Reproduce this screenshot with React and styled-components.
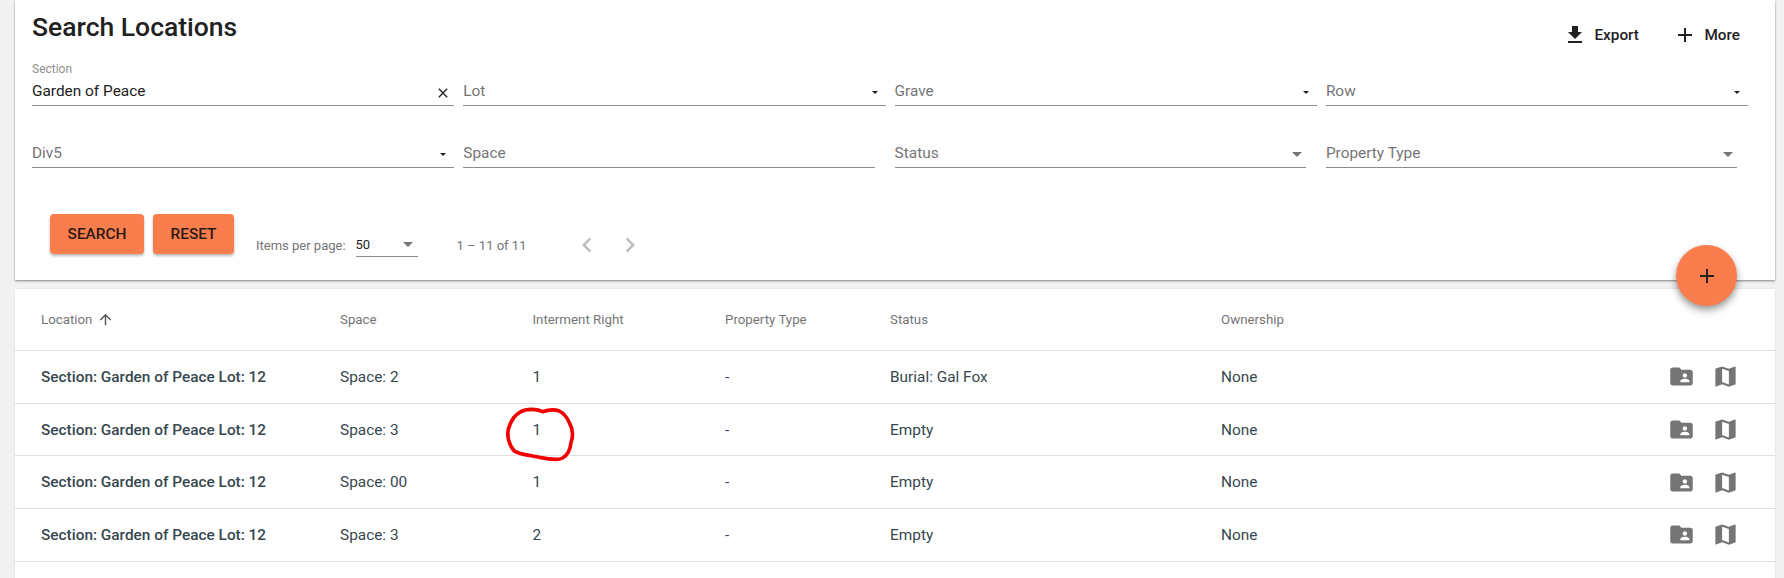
import React from 'react';
import styled, {createGlobalStyle} from 'styled-components';

const GlobalStyle = createGlobalStyle`
    html, body {
        margin: 0;
        height: 100%;
        overflow: hidden;
        background: #f1f1f1;
        font-family: Roboto, 'Liberation Sans', sans-serif;
    }
`

const ORANGE = '#fa7d4d';

const Page = styled.div`
    position: relative;
    height: 100vh;
    padding: 0 9px 0 15px;
    box-sizing: border-box;
    display: flex;
    flex-direction: column;
    gap: 9px;
`

const SearchCard = styled.section`
    height: 280px;
    flex: none;
    background: #fff;
    box-sizing: border-box;
    padding: 0 0 0 17px;
    box-shadow: 0 1px 2px rgba(0, 0, 0, .45);
`

const Header = styled.div`
    height: 62px;
    display: flex;
    justify-content: space-between;
`

const Title = styled.h1`
    margin: 12px 0 0;
    font-size: 26.5px;
    line-height: 30px;
    font-weight: 500;
    color: #212121;
`

const Actions = styled.div`
    display: flex;
    align-items: flex-start;
    gap: 36.5px;
    padding: 25px 35px 0 0;
`

const Action = styled.button`
    border: none;
    background: none;
    padding: 0;
    display: flex;
    align-items: center;
    gap: 8px;
    height: 20px;
    font: 500 15.3px Roboto, sans-serif;
    color: #212121;
    svg {
        width: 24px;
        height: 24px;
        margin: 0 -1px 0 -2px;
        fill: #212121;
    }
`

const Fields = styled.div`
    display: grid;
    grid-template-columns: repeat(4, 431.3px);
    row-gap: 18px;
`

const Field = styled.div`
    margin-right: ${props => props.$inset}px;
    height: 44px;
    box-sizing: border-box;
    border-bottom: 1px solid #8c8c8c;
    display: flex;
    align-items: flex-end;
    justify-content: space-between;
    position: relative;
    padding: 0 ${props => (props.$big ? 4 : 8)}px 4px 0;
`

const FloatLabel = styled.label`
    position: absolute;
    left: 0;
    top: 0;
    font-size: 12px;
    line-height: 14px;
    color: #8f8f8f;
`

const FieldText = styled.span`
    font-size: 15.4px;
    line-height: 20px;
    color: ${props => (props.$filled ? '#212121' : '#757575')};
`

const Caret = styled.i`
    width: 0;
    height: 0;
    margin-bottom: ${props => (props.$big ? 6 : 7)}px;
    border-style: solid;
    border-color: ${props => (props.$big ? '#757575' : '#212121')} transparent transparent;
    border-width: ${props => (props.$big ? '5px 5px 0' : '3px 3.5px 0')};
`

const ClearIcon = styled.svg`
    width: 16px;
    height: 16px;
    margin: 0 -5px 0 0;
    fill: #212121;
`

const Controls = styled.div`
    display: flex;
    align-items: flex-start;
    margin: 46px 0 0 18px;
`

const Button = styled.button`
    height: 40px;
    width: ${props => props.$width}px;
    margin-right: 9px;
    border: none;
    border-radius: 4px;
    background: ${ORANGE};
    color: #2b1a12;
    font: 500 15.4px Roboto, sans-serif;
    box-shadow: 0 2px 3px rgba(0, 0, 0, .28);
`

const Paginator = styled.div`
    display: flex;
    align-items: center;
    height: 36px;
    margin: 13px 0 0 13px;
    font-size: 13px;
    color: #757575;
`

const PageSelect = styled.div`
    width: 62px;
    height: 24px;
    margin: 0 39px 0 10px;
    box-sizing: border-box;
    border-bottom: 1px solid #8c8c8c;
    display: flex;
    align-items: center;
    justify-content: space-between;
    padding: 0 5px 0 0;
    color: #212121;
    i {
        margin-bottom: 0;
    }
`

const PageRange = styled.span`
    width: 115px;
`

const PageArrow = styled.svg`
    width: 30px;
    height: 30px;
    margin-right: 13px;
    fill: #bdbdbd;
    transform: ${props => (props.$flip ? 'scaleX(-1)' : 'none')};
`

const Fab = styled.button`
    position: absolute;
    left: 1676px;
    top: 245px;
    width: 61px;
    height: 61px;
    border: none;
    border-radius: 50%;
    padding: 0;
    background: ${ORANGE};
    box-shadow: 0 3px 6px rgba(0, 0, 0, .3), 0 6px 10px rgba(0, 0, 0, .14);
    display: flex;
    align-items: center;
    justify-content: center;
    svg {
        width: 24px;
        height: 24px;
        fill: #212121;
    }
`

const TableCard = styled.section`
    flex: 1;
    background: #fff;
    box-shadow: 0 0 1px rgba(0, 0, 0, .2);
`

const Row = styled.div`
    display: grid;
    grid-template-columns: 299px 192.5px 192.5px 165px 331px 200px 1fr;
    align-items: center;
    box-sizing: border-box;
    padding-left: 26px;
    height: ${props => (props.$head ? 62 : 52.7)}px;
    border-bottom: 1px solid #e0e0e0;
    font-size: ${props => (props.$head ? 13.3 : 15.4)}px;
    color: ${props => (props.$head ? '#757575' : '#37474f')};
`

const LocationCell = styled.div`
    font-weight: 500;
`

const SortLabel = styled.span`
    display: flex;
    align-items: center;
    gap: 5px;
    svg {
        width: 17px;
        height: 17px;
        fill: #555;
        margin-top: -1px;
    }
`

const Cell = styled.div`
    position: relative;
`

const Scribble = styled.svg`
    position: absolute;
    left: -42px;
    top: -25px;
    width: 100px;
    height: 70px;
    fill: none;
    stroke: #f00000;
    stroke-width: 11;
    stroke-linejoin: round;
    pointer-events: none;
`

const RowIcons = styled.div`
    display: flex;
    justify-content: flex-end;
    gap: 17px;
    padding-right: 36px;
    svg {
        width: 27px;
        height: 27px;
        fill: #757575;
    }
`

const icons = {
    download: 'M19 9h-4V3H9v6H5l7 7 7-7zM5 18v2h14v-2H5z',
    plus: 'M19 13h-6v6h-2v-6H5v-2h6V5h2v6h6v2z',
    close: 'M19 6.41L17.59 5 12 10.59 6.41 5 5 6.41 10.59 12 5 17.59 6.41 19 12 13.41 17.59 19 19 17.59 13.41 12z',
    chevron: 'M15.41 7.41L14 6l-6 6 6 6 1.41-1.41L10.83 12z',
    arrowUp: 'M4 12l1.41 1.41L11 7.83V20h2V7.83l5.58 5.59L20 12l-8-8-8 8z',
    folder: 'M20 6h-8l-2-2H4c-1.1 0-1.99.9-1.99 2L2 18c0 1.1.9 2 2 2h16c1.1 0 2-.9 2-2V8c0-1.1-.9-2-2-2zm-5 3c1.1 0 2 .9 2 2s-.9 2-2 2-2-.9-2-2 .9-2 2-2zm4 8h-8v-1c0-1.33 2.67-2 4-2s4 .67 4 2v1z',
    map: 'M20.5 3l-.16.03L15 5.1 9 3 3.36 4.9c-.21.07-.36.25-.36.48V20.5c0 .28.22.5.5.5l.16-.03L9 18.9l6 2.1 5.64-1.9c.21-.07.36-.25.36-.48V3.5c0-.28-.22-.5-.5-.5zM15 19l-6-2.11V5l6 2.11V19z',
};

const Icon = ({name}) => (
    <svg viewBox="0 0 24 24"><path d={icons[name]} /></svg>
);

const rows = [
    {space: '2', right: '1', status: 'Burial: Gal Fox'},
    {space: '3', right: '1', status: 'Empty', circled: true},
    {space: '00', right: '1', status: 'Empty'},
    {space: '3', right: '2', status: 'Empty'},
];

const topFields = ['Lot', 'Grave', 'Row'];

const App = () => {
    return (
        <Page>
            <GlobalStyle />
            <SearchCard>
                <Header>
                    <Title>Search Locations</Title>
                    <Actions>
                        <Action><Icon name="download" />Export</Action>
                        <Action><Icon name="plus" />More</Action>
                    </Actions>
                </Header>
                <Fields>
                    <Field $inset={9}>
                        <FloatLabel>Section</FloatLabel>
                        <FieldText $filled>Garden of Peace</FieldText>
                        <ClearIcon viewBox="0 0 24 24"><path d={icons.close} /></ClearIcon>
                    </Field>
                    {topFields.map(name => (
                        <Field $inset={9} key={name}>
                            <FieldText>{name}</FieldText>
                            <Caret />
                        </Field>
                    ))}
                    <Field $inset={9}>
                        <FieldText>Div5</FieldText>
                        <Caret />
                    </Field>
                    <Field $inset={20}>
                        <FieldText>Space</FieldText>
                    </Field>
                    <Field $inset={20} $big>
                        <FieldText>Status</FieldText>
                        <Caret $big />
                    </Field>
                    <Field $inset={20} $big>
                        <FieldText>Property Type</FieldText>
                        <Caret $big />
                    </Field>
                </Fields>
                <Controls>
                    <Button $width={94}>SEARCH</Button>
                    <Button $width={81}>RESET</Button>
                    <Paginator>
                        <span>Items per page:</span>
                        <PageSelect>
                            <span>50</span>
                            <Caret $big />
                        </PageSelect>
                        <PageRange>1 – 11 of 11</PageRange>
                        <PageArrow viewBox="0 0 24 24"><path d={icons.chevron} /></PageArrow>
                        <PageArrow $flip viewBox="0 0 24 24"><path d={icons.chevron} /></PageArrow>
                    </Paginator>
                </Controls>
            </SearchCard>
            <Fab><Icon name="plus" /></Fab>
            <TableCard>
                <Row $head>
                    <SortLabel>Location <Icon name="arrowUp" /></SortLabel>
                    <div>Space</div>
                    <div>Interment Right</div>
                    <div>Property Type</div>
                    <div>Status</div>
                    <div>Ownership</div>
                </Row>
                {rows.map((row, i) => (
                    <Row key={i}>
                        <LocationCell>Section: Garden of Peace Lot: 12</LocationCell>
                        <div>Space: {row.space}</div>
                        <Cell>
                            {row.right}
                            {row.circled && (
                                <Scribble viewBox="0 0 300 210">
                                    <path d="M155 47C135 38 105 38 90 47C72 56 58 78 52 100C48 118 52 145 70 165C85 176 120 178 150 185C175 190 200 194 215 186C232 176 238 160 240 140C248 118 245 98 235 80C228 64 222 54 205 45C190 40 170 42 155 47Z" />
                                </Scribble>
                            )}
                        </Cell>
                        <div>-</div>
                        <div>{row.status}</div>
                        <div>None</div>
                        <RowIcons>
                            <Icon name="folder" />
                            <Icon name="map" />
                        </RowIcons>
                    </Row>
                ))}
            </TableCard>
        </Page>
    );
};

export default App;
